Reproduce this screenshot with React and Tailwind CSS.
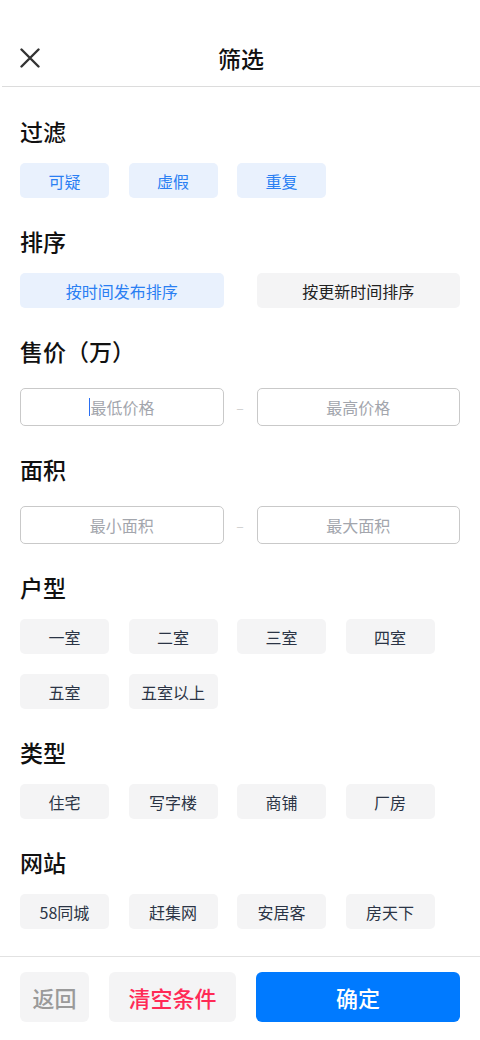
import React from "react";

const font = { fontFamily: '"Noto Sans CJK SC", "Noto Sans", sans-serif' };

const Heading = ({ children }) => (
  <h2 className="h-8 text-[23px] leading-8 font-medium text-[#111]">{children}</h2>
);

const Chip = ({ label, active }) => (
  <div
    className={
      "w-[89px] h-[35px] rounded-[5px] flex items-center justify-center text-[16px] " +
      (active ? "bg-[#e9f1fd] text-[#2a7ff3]" : "bg-[#f4f4f5] text-[#2b3445]")
    }
  >
    {label}
  </div>
);

const ChipGroup = ({ items, active = false }) => (
  <div className="mt-4 flex flex-wrap gap-x-[19.5px] gap-y-5">
    {items.map((it) => (
      <Chip key={it} label={it} active={active} />
    ))}
  </div>
);

const Field = ({ placeholder, caret }) => (
  <div className="flex-1 h-[38px] rounded-[5px] border-[1.5px] border-[#c9c9c9] flex items-center justify-center text-[16px] text-[#a3a6ad]">
    {caret && <span className="w-[1.5px] h-[18px] bg-[#2a6ff3]" />}
    {placeholder}
  </div>
);

const RangeRow = ({ min, max, caret }) => (
  <div className="mt-[21px] flex items-center">
    <Field placeholder={min} caret={caret} />
    <div className="w-[33px] text-center text-[#d0d0d0] text-[14px]">–</div>
    <Field placeholder={max} />
  </div>
);

export default function App() {
  return (
    <div className="w-[480px] h-[1040px] bg-white flex flex-col" style={font}>
      <div className="ml-[2px] h-[87px] pt-10 px-[18px] flex items-start border-b border-[#dcdcdc]">
        <div className="w-10 h-9 flex items-center">
          <svg width="20" height="20" viewBox="0 0 20 20" fill="none">
            <path d="M1.5 1.5L18.5 18.5M18.5 1.5L1.5 18.5" stroke="#333" strokeWidth="2.4" strokeLinecap="round" />
          </svg>
        </div>
        <div className="flex-1 h-9 flex items-center justify-center text-[23px] font-medium text-[#111]">
          筛选
        </div>
        <div className="w-10" />
      </div>

      <div className="px-5 pt-7">
        <Heading>过滤</Heading>
        <ChipGroup items={["可疑", "虚假", "重复"]} active />

        <div className="mt-[27px]">
          <Heading>排序</Heading>
          <div className="mt-4 flex gap-[33px]">
            <div className="flex-1 h-[35px] rounded-[5px] bg-[#e9f1fd] text-[#2a7ff3] text-[16px] flex items-center justify-center">
              按时间发布排序
            </div>
            <div className="flex-1 h-[35px] rounded-[5px] bg-[#f4f4f5] text-[#222] text-[16px] flex items-center justify-center">
              按更新时间排序
            </div>
          </div>
        </div>

        <div className="mt-[27px]">
          <Heading>售价（万）</Heading>
          <RangeRow min="最低价格" max="最高价格" caret />
        </div>

        <div className="mt-[27px]">
          <Heading>面积</Heading>
          <RangeRow min="最小面积" max="最大面积" />
        </div>

        <div className="mt-[27px]">
          <Heading>户型</Heading>
          <ChipGroup items={["一室", "二室", "三室", "四室", "五室", "五室以上"]} />
        </div>

        <div className="mt-[27px]">
          <Heading>类型</Heading>
          <ChipGroup items={["住宅", "写字楼", "商铺", "厂房"]} />
        </div>

        <div className="mt-[27px]">
          <Heading>网站</Heading>
          <ChipGroup items={["58同城", "赶集网", "安居客", "房天下"]} />
        </div>
      </div>

      <div className="mt-[27px] border-t border-[#e2e2e2] px-5 pt-[15px] flex gap-5">
        <button className="w-[69px] h-[50px] rounded-[6px] bg-[#f4f4f5] text-[#9a9a9a] text-[22px] font-medium">
          返回
        </button>
        <button className="w-[127px] h-[50px] rounded-[6px] bg-[#f4f4f5] text-[#ff2a55] text-[22px] font-medium">
          清空条件
        </button>
        <button className="flex-1 h-[50px] rounded-[6px] bg-[#007aff] text-white text-[22px] font-medium">
          确定
        </button>
      </div>
    </div>
  );
}
